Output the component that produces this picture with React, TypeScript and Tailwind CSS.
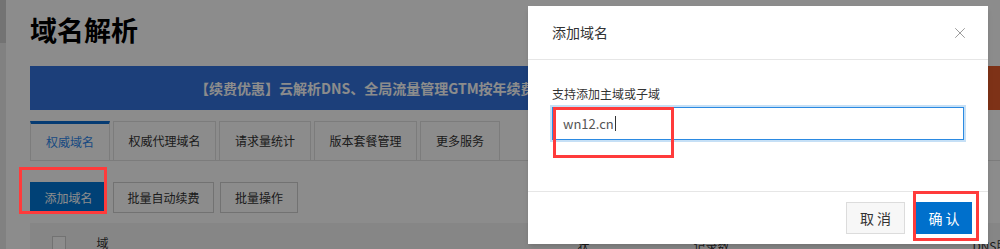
import { X } from 'lucide-react'

const tabs = [
  { label: '权威域名', w: 'w-[80px]', active: true },
  { label: '权威代理域名', w: 'w-[103px]' },
  { label: '请求量统计', w: 'w-[92px]' },
  { label: '版本套餐管理', w: 'w-[103px]' },
  { label: '更多服务', w: 'w-[80px]' },
]

function Page() {
  return (
    <div className="flex h-full">
      <div className="w-[6px] shrink-0 bg-[#ececec]">
        <div className="h-[43px] bg-[#d2d2d2]" />
      </div>
      <div className="flex-1 pl-[24px] min-w-0">
        <h1 className="pt-[12px] text-[27px] leading-[36px] font-bold text-black">域名解析</h1>
        <div className="mt-[18px] h-[44px] flex w-[1000px]">
          <div className="flex-1 bg-[#3474de] flex items-center pl-[165px]">
            <span className="text-[14px] font-bold text-white whitespace-nowrap">
              【续费优惠】云解析DNS、全局流量管理GTM按年续费享优惠
            </span>
          </div>
          <div className="w-[64px] bg-[#e65c2a]" />
        </div>
        <div className="mt-[11px] flex gap-[3px] border-b border-[#e2e2e2] w-[1000px]">
          {tabs.map((t) => (
            <div
              key={t.label}
              className={
                t.active
                  ? `${t.w} h-[39px] -mb-px flex items-center justify-center text-[12px] text-[#2d87ec] bg-white border-t-[3px] border-t-[#0a6cd2] border-x border-x-[#e2e2e2]`
                  : `${t.w} h-[39px] flex items-center justify-center text-[12px] text-[#333] border border-b-0 border-[#e2e2e2]`
              }
            >
              {t.label}
            </div>
          ))}
        </div>
        <div className="mt-[21px] flex gap-[6px]">
          <button className="w-[77px] h-[31px] bg-[#0077d8] text-white text-[12px]">添加域名</button>
          <button className="w-[101px] h-[31px] border border-[#cfcfcf] text-[#333] text-[12px]">批量自动续费</button>
          <button className="w-[78px] h-[31px] border border-[#cfcfcf] text-[#333] text-[12px]">批量操作</button>
        </div>
        <div className="mt-[10px] h-[40px] bg-[#f5f5f5] w-[1000px] flex items-start pt-[13px] text-[12px] text-[#333]">
          <div className="ml-[22px] w-[15px] h-[15px] border border-[#cfcfcf] bg-white" />
          <span className="ml-[30px] leading-[16px] -mt-[1px]">域名</span>
          <span className="ml-[458px] leading-[16px] mt-[2px]">状态</span>
          <span className="ml-[93px] leading-[16px] mt-[2px]">记录数 ▾</span>
          <span className="ml-[236px] leading-[16px] mt-[2px]">DNS服务器</span>
        </div>
      </div>
    </div>
  )
}

function Modal() {
  return (
    <div className="absolute left-[528px] top-[6px] w-[460px] h-[238px] bg-white flex flex-col shadow-md">
      <div className="h-[54px] shrink-0 pl-[24px] pr-[19px] flex items-center justify-between border-b border-[#e6e6e6]">
        <span className="text-[14px] text-[#333]">添加域名</span>
        <X size={18} strokeWidth={1.3} className="text-[#999]" />
      </div>
      <div className="flex-1 px-[24px] pt-[26px]">
        <div className="text-[12px] leading-[16px] text-[#333]">支持添加主域或子域</div>
        <div className="h-[37px] p-[2px] bg-[#c6e0f6] -mx-[2px] mt-[3px]">
          <div className="h-full bg-white border border-[#2b8ae2] flex items-center pl-[10px] text-[13px] text-[#555]">
            wn12.cn<span className="ml-px w-px h-[15px] bg-[#333]" />
          </div>
        </div>
      </div>
      <div className="h-[53px] shrink-0 border-t border-[#e6e6e6] flex items-center justify-end gap-[11px] pr-[16px]">
        <button className="w-[59px] h-[32px] border border-[#dcdcdc] bg-[#f7f7f7] text-[14px] text-[#333] tracking-[3px] pl-[3px]">取消</button>
        <button className="w-[56px] h-[32px] bg-[#0070cc] text-[14px] text-white tracking-[3px] pl-[3px]">确认</button>
      </div>
    </div>
  )
}

export default function App() {
  return (
    <div
      className="relative w-[1000px] h-[249px] overflow-hidden bg-white"
      style={{ fontFamily: '"Noto Sans CJK SC", "Noto Sans", sans-serif' }}
    >
      <Page />
      <div className="absolute inset-0 bg-black/45" />
      <Modal />
      <div className="absolute left-[19px] top-[167px] w-[88px] h-[47px] border-[3px] border-[#ff3b3b]" />
      <div className="absolute left-[553px] top-[107px] w-[121px] h-[51px] border-[3px] border-[#ff3b3b]" />
      <div className="absolute left-[913px] top-[191px] w-[66px] h-[50px] border-[3px] border-[#ff3b3b]" />
    </div>
  )
}
